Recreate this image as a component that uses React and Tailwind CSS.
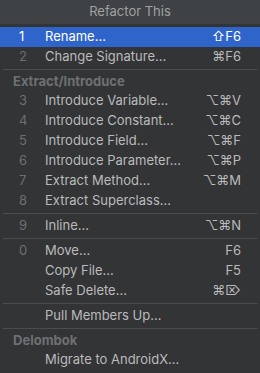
import React from 'react';

const groups = [
  {
    items: [
      { n: '1', label: 'Rename...', key: '⇧F6', active: true },
      { n: '2', label: 'Change Signature...', key: '⌘F6' },
    ],
  },
  {
    title: 'Extract/Introduce',
    items: [
      { n: '3', label: 'Introduce Variable...', key: '⌥⌘V' },
      { n: '4', label: 'Introduce Constant...', key: '⌥⌘C' },
      { n: '5', label: 'Introduce Field...', key: '⌥⌘F' },
      { n: '6', label: 'Introduce Parameter...', key: '⌥⌘P' },
      { n: '7', label: 'Extract Method...', key: '⌥⌘M' },
      { n: '8', label: 'Extract Superclass...' },
    ],
  },
  { items: [{ n: '9', label: 'Inline...', key: '⌥⌘N' }] },
  {
    items: [
      { n: '0', label: 'Move...', key: 'F6' },
      { label: 'Copy File...', key: 'F5' },
      { label: 'Safe Delete...', key: '⌘⌦' },
    ],
  },
  { items: [{ label: 'Pull Members Up...' }] },
  { title: 'Delombok', items: [{ label: 'Migrate to AndroidX...' }] },
];

function Row({ item }) {
  return (
    <div
      className={`flex items-center h-5 pr-[19px] text-[13px] ${
        item.active ? 'bg-[#2f65ca] text-white' : 'text-[#bbbbbb]'
      }`}
    >
      <span className={`w-[45px] pl-[19px] ${item.active ? 'text-white' : 'text-[#6d6f71]'}`}>
        {item.n}
      </span>
      <span className="flex-1">{item.label}</span>
      {item.key && <span>{item.key}</span>}
    </div>
  );
}

export default function App() {
  return (
    <div
      className="w-[260px] h-[373px] bg-[#323436] overflow-hidden"
      style={{ fontFamily: 'Inter, "DejaVu Sans", sans-serif' }}
    >
      <div className="h-6 bg-[#3f4244] flex items-center justify-center text-[13px] text-[#9fa1a3]">
        Refactor This
      </div>
      <div className="pt-[3px]">
        {groups.map((g, i) => (
          <div key={i}>
            {i > 0 && (
              <div className="h-[5px] flex items-center px-[3px]">
                <div className="h-px w-full bg-[#4a4d4f]" />
              </div>
            )}
            {g.title && (
              <div className="h-[19px] flex items-center pl-[13px] text-[13px] font-bold text-[#6e7072]">
                {g.title}
              </div>
            )}
            {g.items.map((it) => (
              <Row key={it.label} item={it} />
            ))}
          </div>
        ))}
      </div>
    </div>
  );
}
